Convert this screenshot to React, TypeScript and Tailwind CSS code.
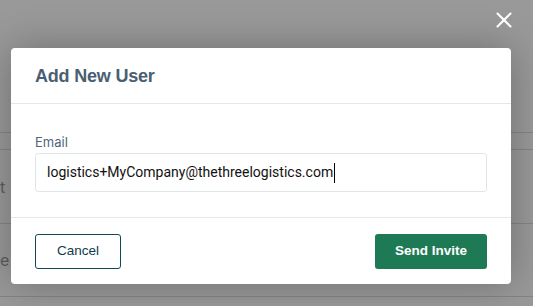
import { X } from "lucide-react"

const rows = [
  { h: "h-[17px]", text: "" },
  { h: "h-[74px]", text: "t" },
  { h: "h-[73px]", text: "e L" },
]

export default function App() {
  return (
    <div className="relative h-[306px] w-[533px] overflow-hidden bg-white font-['Inter',sans-serif]">
      {/* page behind the overlay */}
      <div className="flex flex-col pt-[132px]">
        {rows.map((row, i) => (
          <div
            key={i}
            className={`flex ${row.h} items-center border-t border-[#dcdcdc] text-[16px] text-[#9a9a9a]`}
          >
            {row.text}
          </div>
        ))}
        <div className="h-px bg-[#dcdcdc]" />
      </div>

      {/* overlay + modal */}
      <div className="absolute inset-0 bg-black/40">
        <button type="button" className="absolute right-[16px] top-[7px] text-white">
          <X className="h-[26px] w-[26px]" strokeWidth={1.9} />
        </button>

        <div className="flex pl-[11px] pt-[48px]">
          <div className="w-[500px] rounded-[4px] bg-white shadow-[0_0_40px_rgba(0,0,0,0.28)]">
            <div className="flex h-[56px] items-center border-b border-[#dfe8ed] px-[24px]">
              <h2 className="pt-[2px] font-['Liberation_Sans',Arial,sans-serif] text-[18px] font-bold tracking-[-0.2px] text-[#4a6072]">
                Add New User
              </h2>
            </div>

            <div className="px-[24px] pb-[25px] pt-[28px]">
              <label className="mb-px block text-[13px] leading-5 text-[#4e6778]">Email</label>
              <div className="flex h-[39px] items-center rounded-[3px] border border-[#dfe6ea] px-[11px] font-['Roboto',sans-serif] text-[14px] text-[#111]">
                logistics+MyCompany@thethreelogistics.com
                <span className="ml-px h-[20px] w-px bg-black" />
              </div>
            </div>

            <div className="flex items-center justify-between border-t border-[#e3e8eb] px-[24px] pb-[15px] pt-[16px] font-['Liberation_Sans',Arial,sans-serif]">
              <button
                type="button"
                className="flex h-[35px] w-[86px] items-center justify-center rounded-[3px] border border-[#0f4b57] text-[13.5px] text-[#0e3b4a]"
              >
                Cancel
              </button>
              <button
                type="button"
                className="flex h-[35px] w-[112px] items-center justify-center rounded-[3px] bg-[#1e7a54] text-[13.5px] font-bold text-white"
              >
                Send Invite
              </button>
            </div>
          </div>
        </div>
      </div>
    </div>
  )
}
